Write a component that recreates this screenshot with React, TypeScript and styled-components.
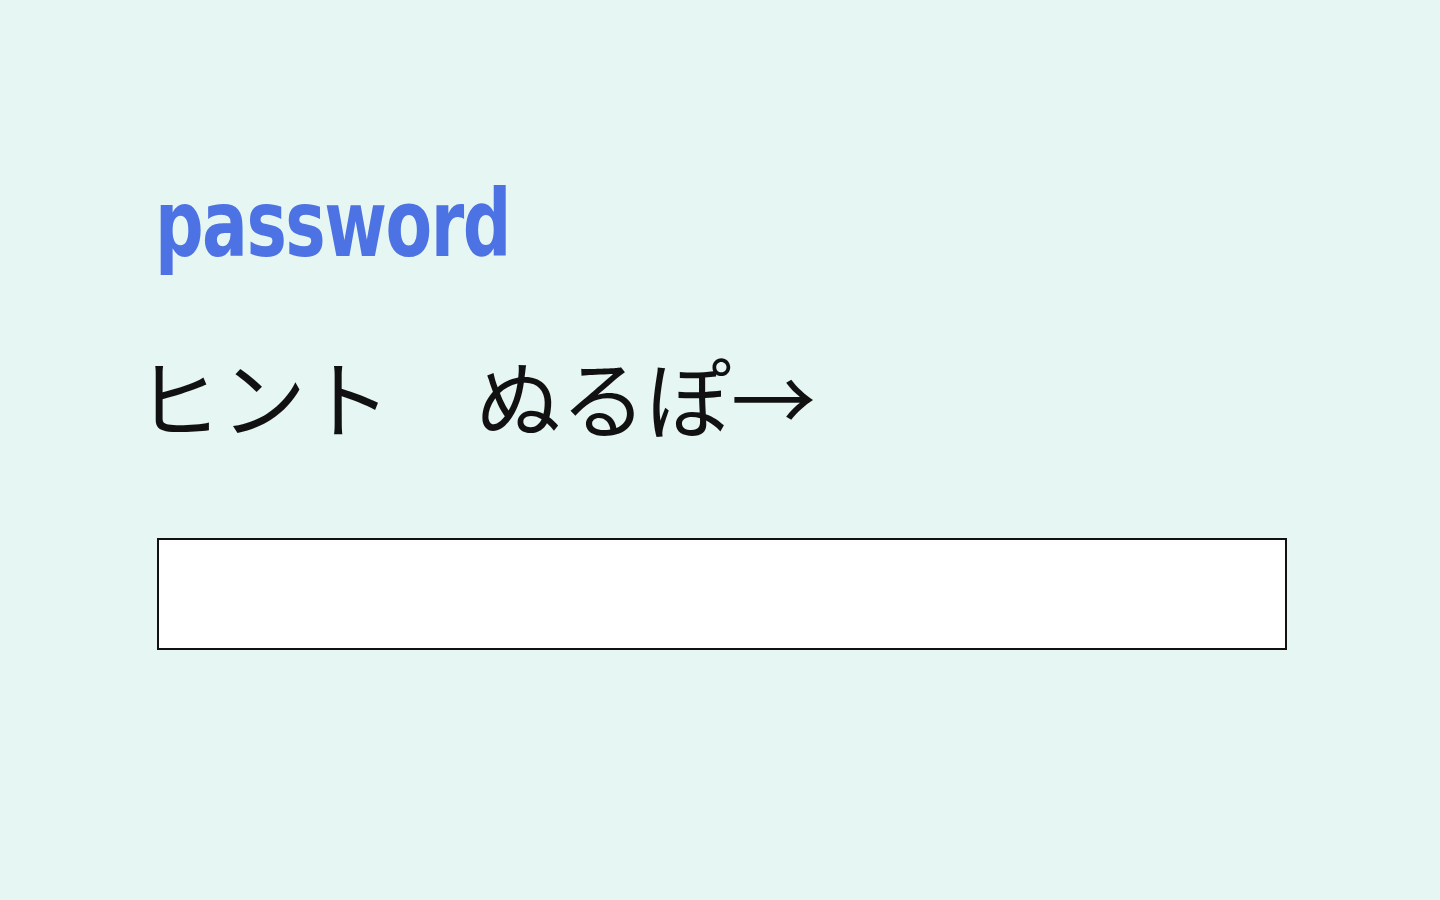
import { createGlobalStyle, styled } from "styled-components";

const GlobalStyle = createGlobalStyle`
  html, body {
    margin: 0;
    padding: 0;
    background: #e6f6f2;
  }
  body {
    font-family: "Noto Sans CJK JP", "Noto Sans", sans-serif;
  }
`;

export default function App() {
  return (
    <>
      <GlobalStyle />
      <Page>
        <Title>password</Title>
        <Hint>ヒント　ぬるぽ→</Hint>
        <Field type="password" aria-label="password" />
      </Page>
    </>
  );
}

const Page = styled.main`
  display: flex;
  flex-direction: column;
  align-items: flex-start;
  min-height: 900px;
  box-sizing: border-box;
  padding: 170px 0 0 138px;
`;

const Title = styled.h1`
  margin: 0 0 0 17px;
  font-family: "DejaVu Sans", sans-serif;
  font-stretch: condensed;
  font-weight: 700;
  font-size: 100px;
  line-height: 110px;
  letter-spacing: -2px;
  color: #4d72e3;
  transform-origin: left center;
  transform: scale(0.755, 0.92);
`;

const Hint = styled.p`
  margin: 65px 0 0 -2px;
  font-family: "Noto Sans CJK JP", sans-serif;
  font-size: 85px;
  line-height: 100px;
  color: #111;
`;

const Field = styled.input`
  margin: 93px 0 0 19px;
  width: 1130px;
  height: 112px;
  box-sizing: border-box;
  border: 2px solid #111;
  background: #fff;
  outline: none;
  padding: 0 12px;
  font-size: 40px;
`;
